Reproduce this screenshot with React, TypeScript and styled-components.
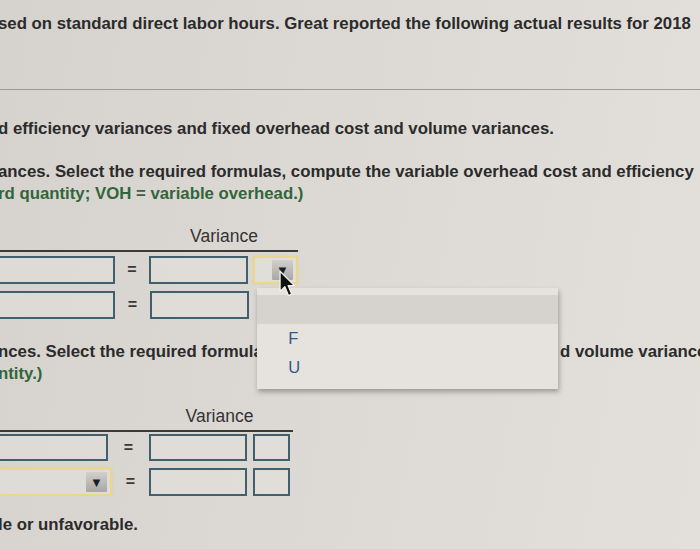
import React from "react";
import styled, { createGlobalStyle } from "styled-components";

const GlobalStyle = createGlobalStyle`
  html, body {
    margin: 0;
    padding: 0;
  }
  body {
    font-family: "Liberation Sans", Arial, Helvetica, sans-serif;
    color: #2b2b2b;
  }
`;

const Page = styled.div`
  position: relative;
  width: 700px;
  height: 549px;
  overflow: hidden;
  background: linear-gradient(100deg, #d6d2cd 0%, #dcd9d4 45%, #e3e0dc 100%);
`;

const Para = styled.div<{ $green?: boolean; $top?: number }>`
  margin-top: ${(p) => p.$top ?? 0}px;
  margin-left: -2px;
  font-size: 16.8px;
  font-weight: bold;
  line-height: 22px;
  white-space: nowrap;
  color: ${(p) => (p.$green ? "#32663a" : "#2b2b2b")};
`;

const Rule = styled.div<{ $top: number }>`
  margin-top: ${(p) => p.$top}px;
  height: 1px;
  background: #9c9a96;
`;

const Table = styled.div<{ $top: number; $width: number }>`
  position: relative;
  margin-top: ${(p) => p.$top}px;
  margin-left: -40px;
  width: ${(p) => p.$width}px;
`;

const HeadRow = styled.div<{ $indent: number; $span: number }>`
  display: flex;
  padding-left: ${(p) => p.$indent}px;
  height: 22px;
  align-items: center;
  > span {
    width: ${(p) => p.$span}px;
    text-align: center;
    font-size: 17.5px;
    color: #333;
  }
`;

const HeadRule = styled.div`
  margin-top: 3px;
  height: 2px;
  background: #3a3a3a;
`;

const Row = styled.div<{ $top: number; $h: number }>`
  position: relative;
  display: flex;
  align-items: center;
  margin-top: ${(p) => p.$top}px;
  height: ${(p) => p.$h}px;
`;

const Field = styled.div<{ $w: number; $gap?: number }>`
  box-sizing: border-box;
  width: ${(p) => p.$w}px;
  height: 100%;
  margin-left: ${(p) => p.$gap ?? 0}px;
  border: 2px solid #40606e;
  background: rgba(235, 233, 229, 0.35);
`;

const Eq = styled.div<{ $w: number }>`
  width: ${(p) => p.$w}px;
  text-align: center;
  font-size: 16px;
  font-weight: bold;
  color: #3a3a3a;
`;

const Select = styled.div<{ $w: number; $gap?: number }>`
  position: relative;
  box-sizing: border-box;
  display: flex;
  justify-content: flex-end;
  align-items: stretch;
  width: ${(p) => p.$w}px;
  height: 100%;
  margin-left: ${(p) => p.$gap ?? 0}px;
  padding: 2px 3px 2px 0;
  border: 2px solid #e9d88a;
  box-shadow: 0 0 2px rgba(230, 205, 110, 0.6);
  background: rgba(230, 228, 224, 0.5);
`;

const ArrowBtn = styled.div`
  width: 21px;
  display: flex;
  align-items: center;
  justify-content: center;
  background: linear-gradient(#d2d0cd, #a9a7a4);
  border-radius: 1px;
  font-size: 13px;
  color: #1e1e1e;
`;

const Menu = styled.div`
  position: absolute;
  top: 30px;
  left: 2px;
  z-index: 5;
  width: 301px;
  box-sizing: border-box;
  padding: 7px 0 7px;
  background: #e6e3df;
  box-shadow: 1px 3px 5px rgba(0, 0, 0, 0.3);
`;

const MenuItem = styled.div<{ $active?: boolean }>`
  height: 29px;
  line-height: 29px;
  padding-left: 31px;
  font-size: 16.5px;
  color: #37578a;
  background: ${(p) => (p.$active ? "#d6d3cf" : "transparent")};
`;

const Cursor = styled.svg`
  position: absolute;
  left: 24px;
  top: 12px;
  z-index: 6;
`;

const Split = styled.div`
  display: flex;
  margin-top: 22px;
`;

const LeftPanel = styled.div`
  width: 558px;
  overflow: hidden;
  flex-shrink: 0;
`;

const RightPanel = styled.div`
  padding-left: 4px;
  flex: 1;
  overflow: hidden;
`;

export default function App() {
  return (
    <>
      <GlobalStyle />
      <Page>
        <Para $top={13}>
          sed on standard direct labor hours. Great reported the following actual results for 2018
        </Para>
        <Rule $top={54} />
        <Para $top={28}>
          d efficiency variances and fixed overhead cost and volume variances.
        </Para>
        <Para $top={21}>
          ances. Select the required formulas, compute the variable overhead cost and efficiency
        </Para>
        <Para $green>rd quantity; VOH = variable overhead.)</Para>

        <Table $top={20} $width={338}>
          <HeadRow $indent={190} $span={148}>
            <span>Variance</span>
          </HeadRow>
          <HeadRule />
          <Row $top={4} $h={28}>
            <Field $w={155} />
            <Eq $w={35}>=</Eq>
            <Field $w={99} />
            <Select $w={45} $gap={5}>
              <ArrowBtn>▼</ArrowBtn>
              <Menu>
                <MenuItem $active>&nbsp;</MenuItem>
                <MenuItem>F</MenuItem>
                <MenuItem>U</MenuItem>
              </Menu>
              <Cursor width="17" height="28" viewBox="0 0 16 26">
                <path
                  d="M1 1 L1 20 L5.5 15.5 L9 24 L12 22.6 L8.6 14.5 L14.5 14.5 Z"
                  fill="#111"
                  stroke="#f2f2f2"
                  strokeWidth="1.2"
                  strokeLinejoin="round"
                />
              </Cursor>
            </Select>
          </Row>
          <Row $top={7} $h={28}>
            <Field $w={155} />
            <Eq $w={35}>=</Eq>
            <Field $w={99} />
          </Row>
        </Table>

        <Split>
          <LeftPanel>
            <Para>nces. Select the required formulas, compute the fixed</Para>
            <Para $green>ntity.)</Para>
            <Table $top={20} $width={333}>
              <HeadRow $indent={189} $span={141}>
                <span>Variance</span>
              </HeadRow>
              <HeadRule />
              <Row $top={2} $h={27}>
                <Field $w={148} />
                <Eq $w={41}>=</Eq>
                <Field $w={98} />
                <Field $w={37} $gap={6} />
              </Row>
              <Row $top={7} $h={28}>
                <Select $w={152}>
                  <ArrowBtn>▼</ArrowBtn>
                </Select>
                <Eq $w={37}>=</Eq>
                <Field $w={98} />
                <Field $w={37} $gap={6} />
              </Row>
            </Table>
          </LeftPanel>
          <RightPanel>
            <Para>d volume variances.</Para>
          </RightPanel>
        </Split>

        <Para $top={18}>le or unfavorable.</Para>
      </Page>
    </>
  );
}
